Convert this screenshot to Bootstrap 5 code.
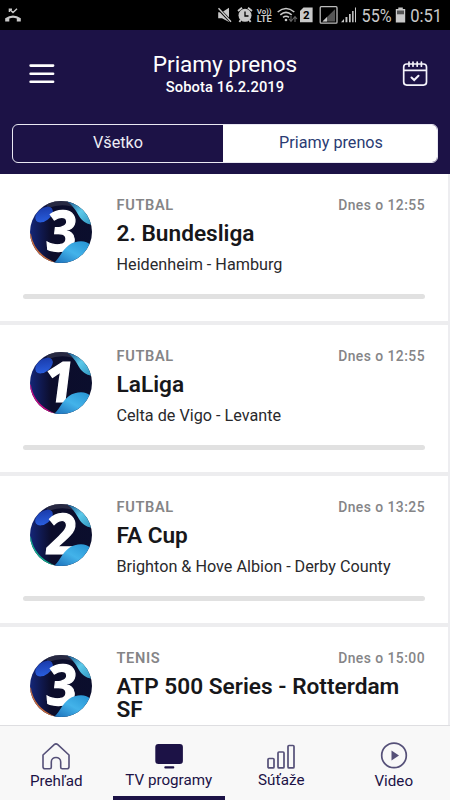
<!DOCTYPE html>
<html lang="sk">
<head>
<meta charset="utf-8">
<meta name="viewport" content="width=device-width, initial-scale=1">
<title>Priamy prenos</title>
<link href="https://cdn.jsdelivr.net/npm/bootstrap@5.3.0/dist/css/bootstrap.min.css" rel="stylesheet">
<style>
body{font-family:Roboto,"Open Sans",sans-serif;height:800px;overflow:hidden;background:#fff;color:#17171a}
svg{display:block;flex:none}
.statusbar{height:30px;background:#000;color:#c9c9c9;flex:none}
.statusbar svg{width:450px;height:30px}
.app-header{height:143.5px;background:#1c1246;flex:none}
.title-row{height:94px;padding:0 22px 0 29px}
.header-icon{width:28px;height:28px;margin-top:30px}
.title-block{margin-right:7px}
.page-title{font-size:22.6px;line-height:26px;letter-spacing:-.05px;font-weight:400;margin:0;padding-top:22px}
.page-date{font-size:14.7px;line-height:18px;font-weight:500;letter-spacing:.1px}
.segment{height:39px;margin:0 12px;border:1.5px solid #e9e8f2;border-radius:6px;overflow:hidden}
.segment .btn{font-size:16.2px;line-height:34px;padding:0 0 2px;border:0;border-radius:0;color:#eeedf5;width:210px}
.segment .btn.active{background:#fff;color:#2a3b73;flex:1;padding-left:2px}
.programs{border-right:2px solid #ededf0;overflow:hidden}
.program{height:151.3px;border-bottom:4px solid #ededef;padding:0 23px;flex:none}
.program-top{height:120px}
.ball{width:64px;height:64px;margin:26.5px 23.5px 0 6px;overflow:visible}
.ball-gold{color:#c66c3e}
.ball-pink{color:#c20d81}
.ball-green{color:#12a98b}
.digit{font-family:"Open Sans",sans-serif;font-size:56px;font-weight:700;font-style:italic;fill:#fff;stroke:#fff;stroke-width:1.2px;text-anchor:middle}
.category,.when{line-height:18px;color:#858587}
.category{font-size:14.6px;font-weight:600;letter-spacing:.65px}
.when{font-size:13.9px;font-weight:500;letter-spacing:.45px}
.info-head{padding-top:22px;height:49px}
.program-title{font-size:22.65px;line-height:22.2px;font-weight:600;margin:0}
.match{font-size:16.2px;line-height:20px;color:#29292c;margin-top:10px}
.track{height:5.3px;border-radius:3px;background:#e1e1e1}
.tabbar{height:75px;background:#f8f8f8;border-top:1px solid #dedee1;flex:none}
.tab{font-size:15.2px;line-height:18px;color:#1c1246;text-decoration:none;width:112.5px;padding-top:14px}
.tab svg{width:30px;height:32px}
.tab.current{border-bottom:4px solid #1c1246}
.tab.current span,.tab.competitions span{margin-top:-1px}
</style>
<script src="https://cdn.jsdelivr.net/npm/bootstrap@5.3.0/dist/js/bootstrap.bundle.min.js"></script>
</head>
<body class="d-flex flex-column">
<svg width="0" height="0" class="position-absolute" aria-hidden="true">
<defs>
<linearGradient id="night" x1="0" x2="1"><stop offset="0" stop-color="#142678"/><stop offset=".34" stop-color="#0c0d2b"/><stop offset="1" stop-color="#0b0e2d"/></linearGradient>
<linearGradient id="aqua" x1="0" y1="1" x2="1" y2="0"><stop offset="0" stop-color="#1768b4"/><stop offset=".5" stop-color="#43b3ea"/><stop offset="1" stop-color="#238fd0"/></linearGradient>
<linearGradient id="teal" x1="0" y1="0" x2="1" y2="1"><stop offset="0" stop-color="#10457f"/><stop offset=".5" stop-color="#5cc9ea"/><stop offset="1" stop-color="#2d91bc"/></linearGradient>
<linearGradient id="blue" x1="0" y1="1" x2="1" y2="0"><stop offset="0" stop-color="#2c65e8"/><stop offset="1" stop-color="#1734a0"/></linearGradient>
<clipPath id="disc"><circle cx="32" cy="32" r="31"/></clipPath>
<symbol id="orb" viewBox="0 0 64 64">
<circle cx="32" cy="32" r="31" fill="url(#night)"/>
<g clip-path="url(#disc)">
<path d="M17 4Q32-3 44 3L49 9Q35 2 19 8Z" fill="#35364d" opacity=".7"/>
<path d="M37 1C44 5 47 11 50 16C53 21 57 24 64 25V0Z" fill="url(#teal)"/>
<ellipse cx="15" cy="14.5" rx="10" ry="6.3" transform="rotate(-38 15 14.5)" fill="url(#blue)"/>
<path d="M1 34Q4 54 25 63" fill="none" stroke="currentColor" stroke-width="1.8"/>
</g>
</symbol>
<symbol id="wave" viewBox="0 0 64 64"><path clip-path="url(#disc)" d="M24 64C31 58 33 50 40 45C47 40 58 40 61 45L64 50V64Z" fill="url(#aqua)"/></symbol>
</defs>
</svg>

<div class="statusbar">
<svg viewBox="0 0 450 30" fill="#c9c9c9" font-family="Roboto, sans-serif">
<path d="M5.2 18.2Q13 12.8 20.8 18.2V21.5H16.8V18.6Q13 17 9.3 18.6V21.5H5.2Z"/>
<path d="M9.5 9.2L13 12.6L17 8.8M9.4 12V9.2H12" fill="none" stroke="#c9c9c9" stroke-width="1.4"/>
<path d="M218.2 12.2H222L229 7.8V22L222 18.2H218.2Z"/><path d="M218 8.2L231.5 22.2" stroke="#000" stroke-width="3"/><path d="M218.5 8.2L231 21.7" stroke="#c9c9c9" stroke-width="1.4"/>
<circle cx="245" cy="15.3" r="6.5"/><path d="M238 11L242 7.7M248 7.7L252 11M240.7 20L239.4 22M249.3 20L250.6 22" stroke="#c9c9c9" stroke-width="1.8"/><path d="M245 11.5V16H248.5" fill="none" stroke="#000" stroke-width="1.3"/>
<text x="256.8" y="14" font-size="7.7" font-weight="700" textLength="14.8" lengthAdjust="spacingAndGlyphs">Vo))</text><text x="256.8" y="22.4" font-size="9" font-weight="700" textLength="15" lengthAdjust="spacingAndGlyphs">LTE</text>
<g fill="none" stroke="#c9c9c9" stroke-width="1.6"><path d="M277.7 12Q286 5 294.3 12"/><path d="M280.3 14.8Q286 10 291.7 14.8"/><path d="M283 17.4Q286 15 289 17.4"/></g><circle cx="286" cy="20" r="1.3"/><path d="M291 16V21M289 19L291 21.3L293 19M295 22V17M293 19L295 16.7L297 19" fill="none" stroke="#666" stroke-width="1.1"/>
<path d="M303.5 7.6H312.6V22.3H300V11Z"/><text x="303" y="19.2" font-size="11.5" font-weight="700" fill="#000">2</text>
<rect x="320.2" y="6.7" width="16.8" height="16.5" rx="1" fill="none" stroke="#bcbcbc" stroke-width="1.3"/><path d="M322.5 21.5L335 9.2V21.5Z" fill="#555"/><path d="M322.5 21.5L327 17V21.5Z"/>
<path d="M341 22.2L344 19V22.2ZM345.5 17H347.4V22.2H345.5ZM349 14H350.7V22.2H349ZM352.1 11H353.6V22.2H352.1ZM355 7.5H356V22.2H355Z"/>
<text x="361.6" y="21.9" font-size="18" textLength="30" lengthAdjust="spacingAndGlyphs">55%</text>
<path d="M398.3 7.6H402.8V9.1H405.2V22.5H395.8V9.1H398.3Z"/><path d="M397 10.5H404V14.3H397Z" fill="#555"/>
<text x="410.2" y="22" font-size="19" textLength="32" lengthAdjust="spacingAndGlyphs">0:51</text>
</svg>
</div>

<header class="app-header text-white">
<div class="title-row d-flex justify-content-between">
<svg class="header-icon" viewBox="0 0 28 28" fill="none" stroke="#fff" stroke-width="2.6" stroke-linecap="round"><path d="M1.6 5.6H24.1M1.6 13.7H24.1M1.6 21.8H24.1"/></svg>
<div class="title-block text-center"><h1 class="page-title">Priamy prenos</h1><div class="page-date">Sobota 16.2.2019</div></div>
<svg class="header-icon" viewBox="-2 0 28 28" fill="none" stroke="#f4f3fb" stroke-width="1.7" stroke-linecap="round"><rect x="1.7" y="4" width="22.8" height="21.1" rx="3"/><path d="M2 10.4H24M7 2V6.2M11 2V6.2M15.2 2V6.2M19.4 2V6.2"/><path d="M9.5 17.5L12.2 20L16.5 15.8" stroke-width="2"/></svg>
</div>
<div class="segment d-flex"><button class="btn">Všetko</button><button class="btn active">Priamy prenos</button></div>
</header>

<main class="programs flex-grow-1 d-flex flex-column">
<article class="program">
<div class="program-top d-flex">
<svg class="ball ball-gold" viewBox="0 0 64 64"><use href="#orb"/><text class="digit" x="29.5" y="51" transform="skewX(5)">3</text><use href="#wave"/></svg>
<div class="flex-grow-1"><div class="info-head d-flex justify-content-between"><span class="category">FUTBAL</span><span class="when">Dnes o 12:55</span></div><h2 class="program-title">2. Bundesliga</h2><div class="match">Heidenheim - Hamburg</div></div>
</div><div class="track"></div>
</article>
<article class="program">
<div class="program-top d-flex">
<svg class="ball ball-pink" viewBox="0 0 64 64"><use href="#orb"/><text class="digit" x="28" y="51" transform="skewX(5)">1</text><use href="#wave"/></svg>
<div class="flex-grow-1"><div class="info-head d-flex justify-content-between"><span class="category">FUTBAL</span><span class="when">Dnes o 12:55</span></div><h2 class="program-title">LaLiga</h2><div class="match">Celta de Vigo - Levante</div></div>
</div><div class="track"></div>
</article>
<article class="program">
<div class="program-top d-flex">
<svg class="ball ball-green" viewBox="0 0 64 64"><use href="#orb"/><text class="digit" x="29.5" y="51" transform="skewX(5)">2</text><use href="#wave"/></svg>
<div class="flex-grow-1"><div class="info-head d-flex justify-content-between"><span class="category">FUTBAL</span><span class="when">Dnes o 13:25</span></div><h2 class="program-title">FA Cup</h2><div class="match">Brighton &amp; Hove Albion - Derby County</div></div>
</div><div class="track"></div>
</article>
<article class="program">
<div class="program-top d-flex">
<svg class="ball ball-gold" viewBox="0 0 64 64"><use href="#orb"/><text class="digit" x="29.5" y="51" transform="skewX(5)">3</text><use href="#wave"/></svg>
<div class="flex-grow-1"><div class="info-head d-flex justify-content-between"><span class="category">TENIS</span><span class="when">Dnes o 15:00</span></div><h2 class="program-title">ATP 500 Series - Rotterdam SF</h2></div>
</div>
</article>
</main>

<nav class="tabbar d-flex">
<a href="#" class="tab d-flex flex-column align-items-center"><svg viewBox="0 0 30 32" fill="none" stroke="#555078" stroke-width="1.6" stroke-linejoin="round"><path d="M2 15L13.2 4.7Q15 3 16.8 4.7L28 15V26.8Q28 28.8 26 28.8H21.2Q19.7 28.8 19.7 27.3V22C19.7 16 10.3 16 10.3 22V27.3Q10.3 28.8 8.8 28.8H4Q2 28.8 2 26.8Z"/></svg><span>Prehľad</span></a>
<a href="#" class="tab current d-flex flex-column align-items-center"><svg viewBox="0 0 30 32" fill="#1c1246"><rect x="1.3" y="4" width="27.6" height="20" rx="3"/><rect x="10.3" y="26.2" width="10" height="2.2" rx="1"/></svg><span>TV programy</span></a>
<a href="#" class="tab competitions d-flex flex-column align-items-center"><svg viewBox="0 0 30 32" fill="none" stroke="#555078" stroke-width="1.7"><rect x="2" y="18.5" width="6" height="9.4" rx="1"/><rect x="12" y="12" width="6" height="15.9" rx="1"/><rect x="22" y="5.5" width="6" height="22.4" rx="1"/></svg><span>Súťaže</span></a>
<a href="#" class="tab d-flex flex-column align-items-center"><svg viewBox="0 0 30 32"><circle cx="15" cy="15.4" r="12.3" fill="none" stroke="#555078" stroke-width="1.7"/><path d="M12.5 10.6L20 15.4L12.5 20.4Z" fill="#555078"/></svg><span>Video</span></a>
</nav>
</body>
</html>
